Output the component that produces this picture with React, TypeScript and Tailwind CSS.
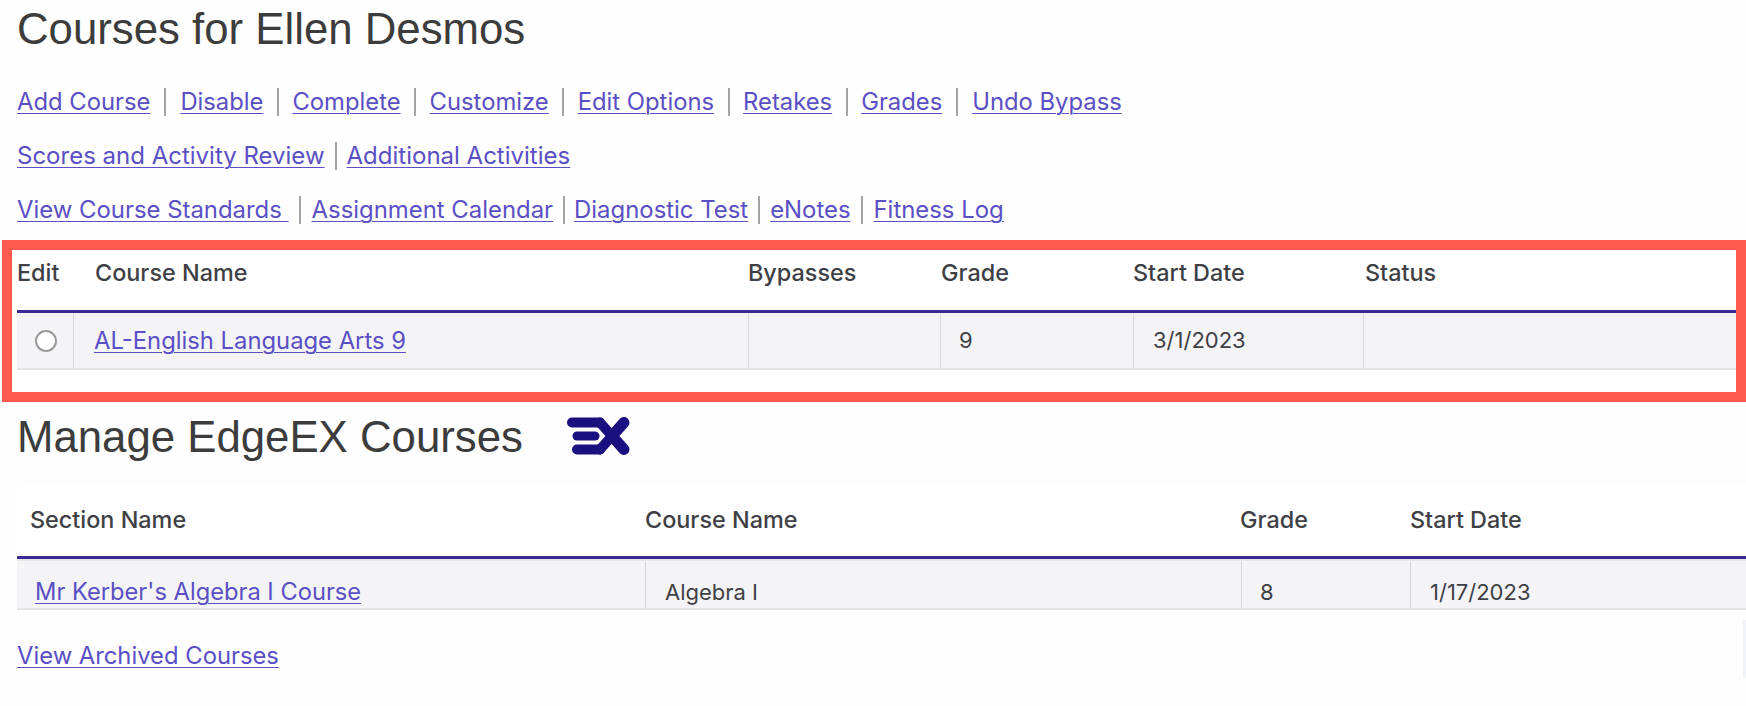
import React from "react";

const Link = ({ children }: { children: React.ReactNode }) => (
  <a href="#" className="text-[#5a4fc4] underline decoration-1 underline-offset-[3px] whitespace-pre">{children}</a>
);

const Sep = ({ w }: { w: string }) => (
  <span className={`flex ${w} justify-center`}>
    <span className="h-7 w-0.5 bg-[#a3a3a8]" />
  </span>
);

function LinkRow({ items, className }: { items: { t: string; sep?: string }[]; className: string }) {
  return (
    <div className={`flex items-center h-[30px] ${className}`}>
      {items.map((it) => (
        <React.Fragment key={it.t}>
          <Link>{it.t}</Link>
          {it.sep ? <Sep w={it.sep} /> : null}
        </React.Fragment>
      ))}
    </div>
  );
}

export default function App() {
  return (
    <div className="w-[1746px] h-[706px] overflow-hidden bg-[#fefefe] text-[#3f3f46] font-['Inter',sans-serif] text-[23.8px] relative">
      <h1 className="pl-[17px] pt-[5px] h-[87px] font-['Liberation_Sans',sans-serif] text-[43.75px] leading-[48px] text-[#3c3c3c]">
        Courses for Ellen Desmos
      </h1>
      <LinkRow
        className="pl-[17px]"
        items={[
          { t: "Add Course", sep: "w-[30px]" },
          { t: "Disable", sep: "w-[29px]" },
          { t: "Complete", sep: "w-[29px]" },
          { t: "Customize", sep: "w-[29px]" },
          { t: "Edit Options", sep: "w-[29px]" },
          { t: "Retakes", sep: "w-[29px]" },
          { t: "Grades", sep: "w-[30px]" },
          { t: "Undo Bypass" },
        ]}
      />
      <LinkRow
        className="pl-[17px] mt-[24px] text-[24px]"
        items={[{ t: "Scores and Activity Review", sep: "w-[22px]" }, { t: "Additional Activities" }]}
      />
      <LinkRow
        className="pl-[17px] mt-[24px] text-[23.9px]"
        items={[
          { t: "View Course Standards ", sep: "w-[23px]" },
          { t: "Assignment Calendar", sep: "w-[21px]" },
          { t: "Diagnostic Test", sep: "w-[22px]" },
          { t: "eNotes", sep: "w-[23px]" },
          { t: "Fitness Log" },
        ]}
      />

      <div className="mt-[15px] ml-[2px] h-[162px] border-[10px] border-[#ff5a4d] bg-white pl-[5px]">
        <div className="h-[63px] border-b-[3px] border-[#3b2a96] grid grid-cols-[78px_653px_193px_192px_232px_1fr] items-center font-medium text-[23.4px] pb-[14px]">
          <div>Edit</div>
          <div>Course Name</div>
          <div>Bypasses</div>
          <div>Grade</div>
          <div>Start Date</div>
          <div>Status</div>
        </div>
        <div className="h-[57px] border-b-2 border-[#e5e5e8] bg-[#f4f4f7] grid grid-cols-[56px_675px_192px_193px_230px_1fr] items-center">
          <div className="flex h-full items-center justify-center pl-[2px]">
            <span className="h-[22px] w-[22px] rounded-full border-2 border-[#9a9a9a] bg-white" />
          </div>
          <div className="flex h-full items-center border-l border-[#d5d8e0] pl-[20px]"><Link>AL-English Language Arts 9</Link></div>
          <div className="h-full border-l border-[#d5d8e0]" />
          <div className="flex h-full items-center border-l border-[#d5d8e0] pl-[18px] text-[22px]">9</div>
          <div className="flex h-full items-center border-l border-[#d5d8e0] pl-[19px] text-[22px]">3/1/2023</div>
          <div className="h-full border-l border-[#d5d8e0]" />
        </div>
      </div>

      <div className="flex items-center pl-[17px] h-[48px] mt-[11px]">
        <h2 className="w-[550px] font-['Liberation_Sans',sans-serif] text-[43.75px] leading-[48px] text-[#3c3c3c]">Manage EdgeEX Courses</h2>
        <svg width="63" height="38" viewBox="0 0 63 38" fill="none" stroke="#1b1080" strokeLinecap="round" className="-mt-[3px]">
          <path d="M5 5.5H33" strokeWidth="10" />
          <path d="M10 19H28" strokeWidth="9" />
          <path d="M10 32.5H33" strokeWidth="10" />
          <path d="M33 5.5L45 19L33 32.5" strokeWidth="10" strokeLinejoin="round" />
          <path d="M57 5.5L45 19L57 32.5" strokeWidth="11" strokeLinejoin="round" />
        </svg>
      </div>

      <div className="ml-[17px] mt-[23px] h-[75px] border-b-[3px] border-[#3b2a96] grid grid-cols-[628px_595px_170px_1fr] items-center font-medium text-[23.4px] bg-white">
        <div className="pl-[13px]">Section Name</div>
        <div>Course Name</div>
        <div>Grade</div>
        <div>Start Date</div>
      </div>
      <div className="ml-[17px] h-[51px] border-y-2 border-[#e5e5e8] bg-[#f4f4f7] grid grid-cols-[628px_596px_169px_1fr]">
        <div className="flex items-end pb-[2px] pl-[18px] leading-[29px] text-[23.7px]"><Link>Mr Kerber's Algebra I Course</Link></div>
        <div className="flex items-end pb-[1px] border-l border-[#d4d4d8] pl-[19px] text-[22px] leading-[30px]">Algebra I</div>
        <div className="flex items-end pb-[1px] border-l border-[#d4d4d8] pl-[18px] text-[22px] leading-[30px]">8</div>
        <div className="flex items-end pb-[1px] border-l border-[#d4d4d8] pl-[19px] text-[22px] leading-[30px]">1/17/2023</div>
      </div>

      <div className="pl-[17px] mt-[28px]"><Link>View Archived Courses</Link></div>
      <div className="absolute right-0 top-[620px] h-[58px] w-[3px] bg-[#f3f3fa]" />
    </div>
  );
}
